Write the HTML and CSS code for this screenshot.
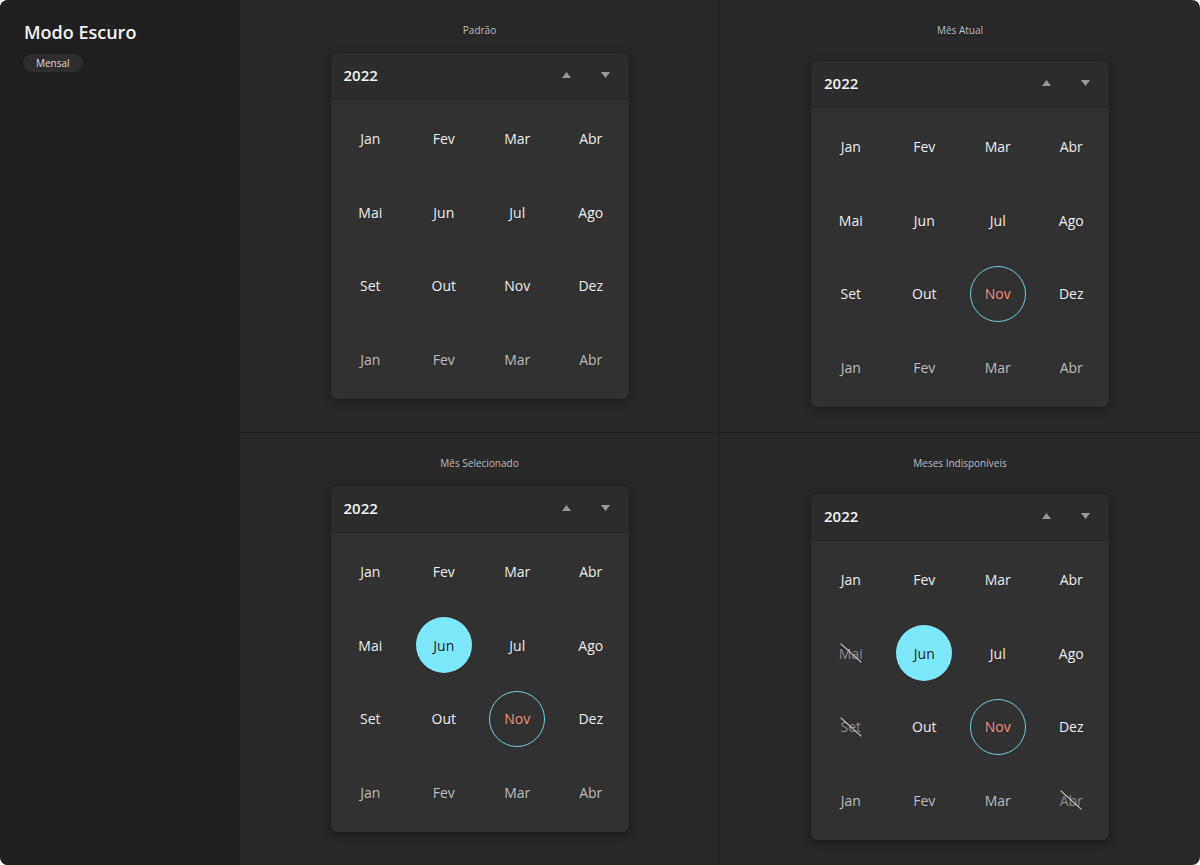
FILE: index.html
```html
<!DOCTYPE html>
<html lang="pt">
<head>
<meta charset="utf-8">
<title>Modo Escuro</title>
<link rel="stylesheet" href="styles.css">
</head>
<body>
<div class="frame">
  <aside class="sidebar">
    <h1 class="title">Modo Escuro</h1>
    <span class="badge">Mensal</span>
  </aside>
  <main class="grid">
    <section class="cell">
      <div class="label">Padrão</div>
      <div class="card">
        <div class="head"><span class="year">2022</span>
          <span class="arrows"><svg width="9" height="6" viewBox="0 0 9 6"><path d="M4.5 0L9 6H0z"/></svg><svg width="9" height="6" viewBox="0 0 9 6"><path d="M0 0H9L4.5 6z"/></svg></span>
        </div>
        <div class="months">
          <div class="m"><span>Jan</span></div><div class="m"><span>Fev</span></div><div class="m"><span>Mar</span></div><div class="m"><span>Abr</span></div>
          <div class="m"><span>Mai</span></div><div class="m"><span>Jun</span></div><div class="m"><span>Jul</span></div><div class="m"><span>Ago</span></div>
          <div class="m"><span>Set</span></div><div class="m"><span>Out</span></div><div class="m"><span>Nov</span></div><div class="m"><span>Dez</span></div>
          <div class="m next"><span>Jan</span></div><div class="m next"><span>Fev</span></div><div class="m next"><span>Mar</span></div><div class="m next"><span>Abr</span></div>
        </div>
      </div>
    </section>
    <section class="cell right">
      <div class="label">Mês Atual</div>
      <div class="card">
        <div class="head"><span class="year">2022</span>
          <span class="arrows"><svg width="9" height="6" viewBox="0 0 9 6"><path d="M4.5 0L9 6H0z"/></svg><svg width="9" height="6" viewBox="0 0 9 6"><path d="M0 0H9L4.5 6z"/></svg></span>
        </div>
        <div class="months">
          <div class="m"><span>Jan</span></div><div class="m"><span>Fev</span></div><div class="m"><span>Mar</span></div><div class="m"><span>Abr</span></div>
          <div class="m"><span>Mai</span></div><div class="m"><span>Jun</span></div><div class="m"><span>Jul</span></div><div class="m"><span>Ago</span></div>
          <div class="m"><span>Set</span></div><div class="m"><span>Out</span></div><div class="m current"><span>Nov</span></div><div class="m"><span>Dez</span></div>
          <div class="m next"><span>Jan</span></div><div class="m next"><span>Fev</span></div><div class="m next"><span>Mar</span></div><div class="m next"><span>Abr</span></div>
        </div>
      </div>
    </section>
    <section class="cell bottom">
      <div class="label">Mês Selecionado</div>
      <div class="card">
        <div class="head"><span class="year">2022</span>
          <span class="arrows"><svg width="9" height="6" viewBox="0 0 9 6"><path d="M4.5 0L9 6H0z"/></svg><svg width="9" height="6" viewBox="0 0 9 6"><path d="M0 0H9L4.5 6z"/></svg></span>
        </div>
        <div class="months">
          <div class="m"><span>Jan</span></div><div class="m"><span>Fev</span></div><div class="m"><span>Mar</span></div><div class="m"><span>Abr</span></div>
          <div class="m"><span>Mai</span></div><div class="m selected"><span>Jun</span></div><div class="m"><span>Jul</span></div><div class="m"><span>Ago</span></div>
          <div class="m"><span>Set</span></div><div class="m"><span>Out</span></div><div class="m current"><span>Nov</span></div><div class="m"><span>Dez</span></div>
          <div class="m next"><span>Jan</span></div><div class="m next"><span>Fev</span></div><div class="m next"><span>Mar</span></div><div class="m next"><span>Abr</span></div>
        </div>
      </div>
    </section>
    <section class="cell right bottom">
      <div class="label">Meses Indisponíveis</div>
      <div class="card">
        <div class="head"><span class="year">2022</span>
          <span class="arrows"><svg width="9" height="6" viewBox="0 0 9 6"><path d="M4.5 0L9 6H0z"/></svg><svg width="9" height="6" viewBox="0 0 9 6"><path d="M0 0H9L4.5 6z"/></svg></span>
        </div>
        <div class="months">
          <div class="m"><span>Jan</span></div><div class="m"><span>Fev</span></div><div class="m"><span>Mar</span></div><div class="m"><span>Abr</span></div>
          <div class="m disabled"><span>Mai</span></div><div class="m selected"><span>Jun</span></div><div class="m"><span>Jul</span></div><div class="m"><span>Ago</span></div>
          <div class="m disabled"><span>Set</span></div><div class="m"><span>Out</span></div><div class="m current"><span>Nov</span></div><div class="m"><span>Dez</span></div>
          <div class="m next"><span>Jan</span></div><div class="m next"><span>Fev</span></div><div class="m next"><span>Mar</span></div><div class="m next disabled"><span>Abr</span></div>
        </div>
      </div>
    </section>
  </main>
</div>
</body>
</html>
```

FILE: styles.css
```css
* { box-sizing: border-box; }
html, body { margin: 0; padding: 0; background: #ffffff; }
body { font-family: "Open Sans", "Noto Sans", sans-serif; }

.frame {
  width: 1200px;
  height: 865px;
  display: flex;
  border-radius: 8px;
  overflow: hidden;
  background: #282828;
}

.sidebar {
  width: 240px;
  flex: none;
  background: #202020;
  padding: 20px 23px;
}
.title {
  margin: 0 0 6px 1px;
  font-size: 18px;
  line-height: 24px;
  font-weight: 600;
  color: #f2f2f2;
}
.badge {
  display: inline-block;
  height: 18px;
  line-height: 18px;
  padding: 0 13px;
  border-radius: 9px;
  background: #2e2e2e;
  color: #dcdcdc;
  font-size: 10px;
}

.grid {
  flex: 1;
  display: grid;
  grid-template-columns: 480px 480px;
  grid-template-rows: 432px 433px;
}
.cell {
  display: flex;
  flex-direction: column;
  align-items: center;
  padding-top: 23px;
}
.cell:not(.right) { border-right: 1px solid #1f1f1f; }
.cell.bottom { border-top: 1px solid #1f1f1f; padding-top: 23px; }
.cell.right .card { margin-top: 8px; }

.label {
  font-size: 10px;
  line-height: 14px;
  color: #bdbdbd;
  margin-bottom: 16px;
}

.card {
  width: 298px;
  border-radius: 6px;
  background: #313131;
  box-shadow: 0 2px 8px rgba(0,0,0,0.35), 0 0 1px rgba(0,0,0,0.4);
  overflow: hidden;
}
.head {
  height: 47px;
  background: #2c2c2c;
  border-bottom: 1px solid #262626;
  display: flex;
  align-items: center;
  justify-content: space-between;
  padding: 0 19px 2px 13px;
}
.year {
  font-size: 15px;
  font-weight: 600;
  color: #f2f2f2;
}
.arrows {
  display: flex;
  gap: 30px;
  align-items: center;
}
.arrows svg { fill: #9a9a9a; display: block; }

.months {
  display: grid;
  grid-template-columns: repeat(4, 73.5px);
  grid-auto-rows: 73.5px;
  padding: 2px 2px 3px 3px;
}
.m {
  display: flex;
  align-items: center;
  justify-content: center;
}
.m span {
  position: relative;
  width: 56px;
  height: 56px;
  border-radius: 50%;
  display: flex;
  align-items: center;
  justify-content: center;
  font-size: 14px;
  color: #ececec;
}
.m.next span { color: #bcbcbc; }
.m.current span {
  color: #f0907c;
  border: 1px solid #6fd0de;
}
.m.selected span {
  background: #7de8fb;
  color: #1f1f1f;
}
.m.disabled span { color: #8a8a8a; }
.m.disabled span::after {
  content: "";
  position: absolute;
  left: 50%;
  top: 50%;
  width: 28px;
  height: 1px;
  background: #d0d0d0;
  transform: translate(-50%, -50%) rotate(42deg);
}
```
